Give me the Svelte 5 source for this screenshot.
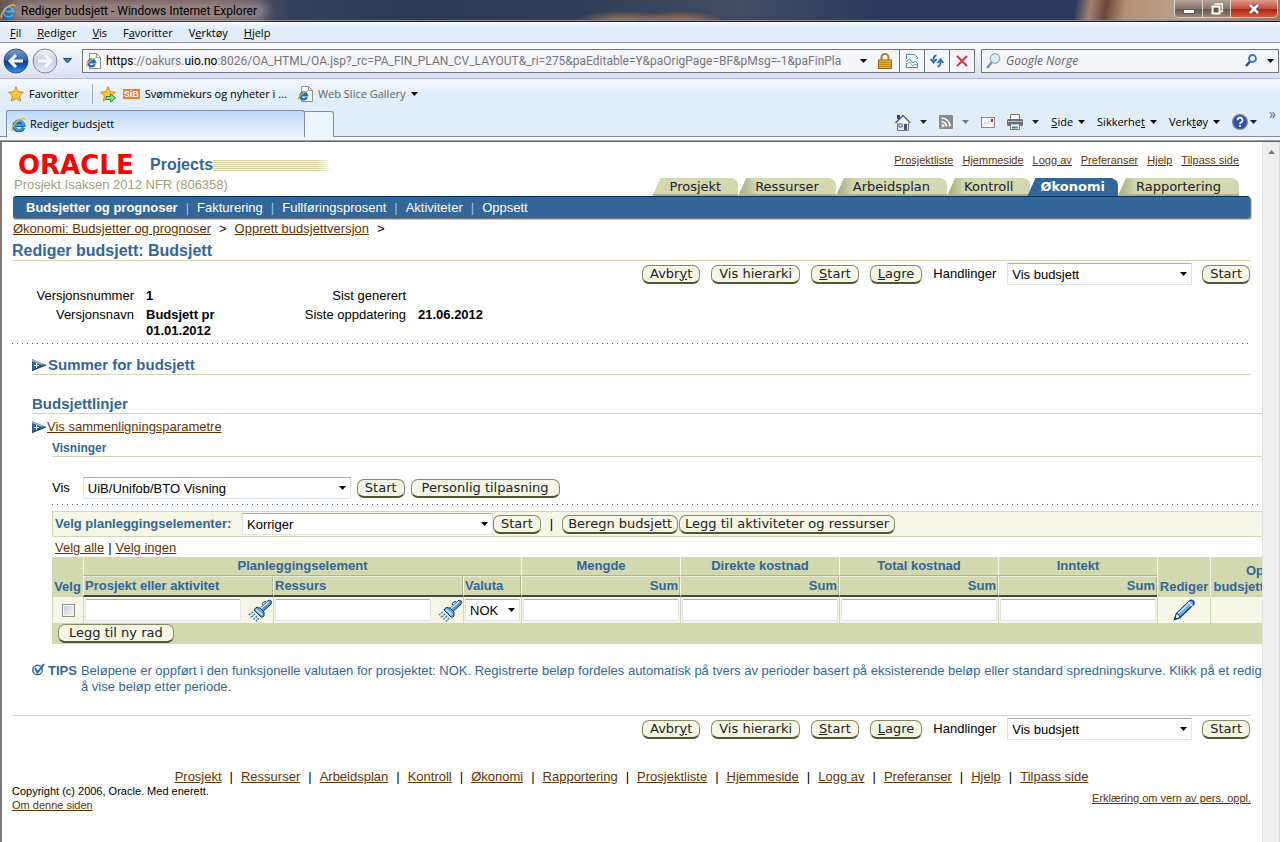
<script>
  const menu = [['', 'F', 'il'], ['', 'R', 'ediger'], ['', 'V', 'is'], ['F', 'a', 'voritter'], ['V', 'e', 'rktøy'], ['', 'H', 'jelp']];
  const commands = [['', 'S', 'ide'], ['Sikkerhe', 't', ''], ['Verk', 't', 'øy']];
  const tabs = ['Prosjekt', 'Ressurser', 'Arbeidsplan', 'Kontroll', 'Økonomi', 'Rapportering'];
  const links = ['Prosjektliste', 'Hjemmeside', 'Logg av', 'Preferanser', 'Hjelp', 'Tilpass side'];
  const subnav = ['Fakturering', 'Fullføringsprosent', 'Aktiviteter', 'Oppsett'];
  const amounts = ['Mengde', 'Direkte kostnad', 'Total kostnad', 'Inntekt'];
</script>

{#snippet ie(size)}
  <svg class="ie" width={size} height={size} viewBox="0 0 16 16" aria-hidden="true">
    <path d="M13.200 11.400A5 5 0 1 1 13.400 8.800H5.500" fill="none" stroke="#1260ae" stroke-width="3.800" />
    <path d="M12.900 11.600A5 5 0 1 1 13.600 8.600H5.500" fill="none" stroke="#3aa5e6" stroke-width="2" />
    <path d="M2 14.800C-.5 13.500 3.500 6 9 3.200c3-1.700 5.800-2.500 5.800.3" fill="none" stroke="#f2ae26" stroke-width="1.500" />
  </svg>
{/snippet}
{#snippet caret(color)}
  <svg class="caret" width="7" height="4" viewBox="0 0 7 4" aria-hidden="true"><path d="M0 0h7L3.500 4z" fill={color} /></svg>
{/snippet}
{#snippet doc()}
  <svg width="15" height="16" viewBox="0 0 15 16" aria-hidden="true">
    <path d="M3.500.5h7l4 4v11h-11z" fill="#fff" stroke="#8a8f9c" /><path d="M10.500.5v4h4" fill="none" stroke="#8a8f9c" />
    <path d="M8.800 11.300A3.400 3.400 0 1 1 9 9.200H3" fill="none" stroke="#1d74c4" stroke-width="2.400" />
    <path d="M1 13.500C0 11 4 6 10 4.800" fill="none" stroke="#f0ad25" stroke-width="1.300" />
  </svg>
{/snippet}
{#snippet disclose()}
  <svg width="14" height="12" viewBox="0 0 14 12" aria-hidden="true">
    <path d="M0 0v12l14-6z" fill="#2f6196" /><path d="M0 0v2l8 3.500h4.500z" fill="#8fb6de" /><path d="M0 11.500L14 6" stroke="#123a66" />
    <path d="M4.500 4v5M2 6.500h5" stroke="#fff" shape-rendering="crispEdges" />
  </svg>
{/snippet}
{#snippet torch()}
  <svg width="24" height="23" viewBox="0 0 24 23" aria-hidden="true">
    <path d="M12 9.500L20 1.800q1.500-1.300 3 .2t0 3L15 12.500z" fill="#5b97cf" stroke="#0d3567" />
    <path d="M8 8.500l4 .5 4 4v4l-2.500 1.500L6 11z" fill="#6aa4d8" stroke="#0d3567" />
    <path d="M13 9.500l8-7M8 10.500l6.500 5.500" stroke="#cfe8fb" stroke-width="1.500" />
    <path d="M14.500 6q-1-3 3.500-3.500" fill="none" stroke="#0d3567" />
    <path d="M5 13l-4 3M7 15l-5 4M9 17l-4 4M11 19l-3 3.500" stroke="#336fa8" stroke-width="1.400" stroke-dasharray="2 1" />
  </svg>
{/snippet}
{#snippet actions(id)}
  <div class="actions">
    <button class="pill">Avbr<u>y</u>t</button>
    <button class="pill">Vis hierarki</button>
    <button class="pill"><u>S</u>tart</button>
    <button class="pill"><u>L</u>agre</button>
    <label for={id}>Handlinger</label>
    <select {id} class="act-select"><option>Vis budsjett</option></select>
    <button class="pill">Start</button>
  </div>
{/snippet}

<div class="window">
  <header class="titlebar">
    {@render ie(16)}
    <span class="title">Rediger budsjett - Windows Internet Explorer</span>
    <div class="winbtns">
      <button aria-label="Minimer"><svg width="12" height="12" viewBox="0 0 12 12"><rect x=".5" y="6.500" width="11" height="4" fill="#fff" stroke="#555a66" /></svg></button>
      <button aria-label="Gjenopprett"><svg width="12" height="12" viewBox="0 0 12 12"><path d="M3.500 1h8v7.500h-2" fill="none" stroke="#fff" stroke-width="1.600" /><rect x="1.500" y="3.500" width="7" height="7" fill="none" stroke="#fff" stroke-width="2" /><rect x="3.500" y="5.500" width="3" height="3" fill="none" stroke="#50545e" /></svg></button>
      <button class="close" aria-label="Lukk"><svg width="12" height="12" viewBox="0 0 12 12"><path d="M2 2l8 8M10 2l-8 8" stroke="#5c3038" stroke-width="4.500" /><path d="M2 2l8 8M10 2l-8 8" stroke="#fff" stroke-width="2.800" /></svg></button>
    </div>
  </header>

  <nav class="menubar">
    {#each menu as [a, b, c]}<button>{a}<u>{b}</u>{c}</button>{/each}
  </nav>

  <div class="navbar">
    <button class="round" aria-label="Tilbake">
      <svg width="26" height="26" viewBox="0 0 26 26"><defs><linearGradient id="bk" x2="0" y2="1"><stop stop-color="#7f9fd4" /><stop offset=".48" stop-color="#2a5cb0" /><stop offset=".52" stop-color="#0a3488" /><stop offset="1" stop-color="#2f9df0" /></linearGradient></defs><circle cx="13" cy="13" r="12" fill="url(#bk)" stroke="#3c4f78" /><path d="M20 13H8M13 7l-6 6 6 6" fill="none" stroke="#fff" stroke-width="3" /></svg>
    </button>
    <button class="round" aria-label="Frem">
      <svg width="26" height="26" viewBox="0 0 26 26"><defs><linearGradient id="fw" x2="0" y2="1"><stop stop-color="#f4f6fa" /><stop offset=".5" stop-color="#c9cfdc" /><stop offset="1" stop-color="#e6eaf2" /></linearGradient></defs><circle cx="13" cy="13" r="12" fill="url(#fw)" stroke="#7c8496" /><path d="M6 13h12M13 7l6 6-6 6" fill="none" stroke="#f6f8fb" stroke-width="3" /></svg>
    </button>
    <svg class="hist" width="9" height="6" viewBox="0 0 9 6" aria-hidden="true"><path d="M.5.5h8L4.500 5z" fill="#2a86c8" stroke="#174f86" /></svg>
    <div class="address">
      {@render doc()}
      <span class="url"><b>https</b>://oakurs.<b>uio.no</b>:8026/OA_HTML/OA.jsp?_rc=PA_FIN_PLAN_CV_LAYOUT&amp;_ri=275&amp;paEditable=Y&amp;paOrigPage=BF&amp;pMsg=-1&amp;paFinPla</span>
      {@render caret('#000')}
      <svg width="14" height="16" viewBox="0 0 14 16" aria-hidden="true"><path d="M3.500 8V4.500a3.500 3.500 0 0 1 7 0V8" fill="none" stroke="#a9833a" stroke-width="2" /><rect x=".5" y="7" width="13" height="8.500" fill="#eab02c" stroke="#9a6c10" /><path d="M1 9.500h12M1 11.500h12M1 13.500h12" stroke="#c48a1a" /></svg>
      <button class="cell" aria-label="Kompatibilitetsvisning"><svg width="12" height="14" viewBox="0 0 12 14"><path d="M.5 5V.5h8l3 3V5M.5 9v4.500h11V9" fill="#fff" stroke="#3a8ac4" /><path d="M0 8l3.500-3L7 9l2-2 3 3M0 11l3.500-3L7 12l2-2 3 2" fill="none" stroke="#4a9ace" /></svg></button>
      <button class="cell" aria-label="Oppdater"><svg width="14" height="14" viewBox="0 0 14 14"><path d="M6.500 1.500Q3 2 3.500 7M.5 5l3 3.500L6.500 5M7.500 12.500Q11 12 10.500 7M7.500 9l3-3.500 3 3.500" fill="none" stroke="#2672b8" stroke-width="1.800" /></svg></button>
      <button class="cell" aria-label="Stopp"><svg width="12" height="12" viewBox="0 0 12 12"><path d="M1 1l10 10M11 1L1 11" stroke="#cf3a3c" stroke-width="2" /></svg></button>
    </div>
    <div class="search">
      <svg width="15" height="16" viewBox="0 0 15 16" aria-hidden="true"><path d="M6 9l-5 6" stroke="#8a8d96" stroke-width="2.500" /><circle cx="9" cy="5.500" r="4.800" fill="#d5ecfa" stroke="#8796aa" /></svg>
      <input aria-label="Søk" placeholder="Google Norge" />
      <svg width="12" height="13" viewBox="0 0 12 13" aria-hidden="true"><path d="M5 7.500L1 12" stroke="#1b4f9c" stroke-width="2.400" /><circle cx="7.500" cy="4.500" r="3.500" fill="none" stroke="#2a78c8" stroke-width="1.800" /></svg>
      {@render caret('#000')}
    </div>
  </div>

  <div class="favbar">
    <button class="fav"><svg width="16" height="16" viewBox="0 0 16 16"><path d="M8 .8l2.200 4.900 5.200.6-3.900 3.500 1.100 5.200L8 12.300 3.400 15l1.100-5.200L.6 6.300l5.200-.6z" fill="#ffc83a" stroke="#cf8a16" /></svg>Favoritter</button>
    <i class="vr"></i>
    <svg width="17" height="16" viewBox="0 0 17 16" aria-hidden="true"><path d="M8 .8l2.200 4.900 5.200.6-3.900 3.500 1.100 5.200L8 12.300 3.400 15l1.100-5.200L.6 6.300l5.200-.6z" fill="#ffc83a" stroke="#cf8a16" /><path d="M6 10.500h4.500V8l5 4-5 4v-2.500H6z" fill="#8fe07f" stroke="#2a8d2c" /></svg>
    <a class="site" href="#svomme"><span class="sib">SiB</span>Svømmekurs og nyheter i ...</a>
    <a class="slice" href="#slice">{@render doc()}Web Slice Gallery {@render caret('#000')}</a>
  </div>

  <div class="tabbar">
    <button class="btab">{@render ie(15)}Rediger budsjett</button>
    <button class="newtab" aria-label="Ny fane"></button>
    <div class="cmds">
      <svg width="16" height="17" viewBox="0 0 16 17" aria-hidden="true"><path d="M2.500 8h11v8.500h-11z" fill="#e8e8f0" stroke="#70748c" /><path d="M.5 9L8 1.500 15.500 9" fill="#fff" stroke="#4a5698" stroke-width="1.400" /><path d="M2 1h3v4H2z" fill="#2c3ea8" /><path d="M4 10h3v3H4z" fill="#fff" stroke="#555" /><path d="M9 10h3v6H9z" fill="#3a4f7c" /></svg>
      {@render caret('#222')}
      <svg width="14" height="14" viewBox="0 0 14 14" aria-hidden="true"><rect width="14" height="14" rx="1" fill="#8b8b8b" /><circle cx="4" cy="10.500" r="1.500" fill="#fff" /><path d="M2.500 6.500a5 5 0 0 1 5 5M2.500 3a8.500 8.500 0 0 1 8.500 8.500" fill="none" stroke="#fff" stroke-width="1.700" /></svg>
      {@render caret('#777')}
      <svg width="14" height="11" viewBox="0 0 14 11" aria-hidden="true"><rect x=".5" y=".5" width="13" height="10" fill="#f6f6f6" stroke="#8a8a90" /><rect x="10" y="2" width="2" height="3" fill="#c22" /><path d="M3 6h5" stroke="#bbb" /></svg>
      <svg width="16" height="16" viewBox="0 0 16 16" aria-hidden="true"><path d="M3.500 5V.5h9V5" fill="#fff" stroke="#777" /><rect y="5" width="16" height="7" rx="1.500" fill="#6d6f76" /><path d="M1 7.500h14" stroke="#b9bbc2" /><path d="M3.500 10h9v5.500h-9z" fill="#fff" stroke="#777" /><path d="M5 13.500h3" stroke="#2a78c8" stroke-width="2" /><path d="M8 13.500h3" stroke="#4a4" stroke-width="2" /></svg>
      {@render caret('#222')}
      {#each commands as [a, b, c]}<button class="cmd"><span>{a}<u>{b}</u>{c}</span>{@render caret('#000')}</button>{/each}
      <button class="help" aria-label="Hjelp"><svg width="16" height="16" viewBox="0 0 16 16"><circle cx="8" cy="8" r="7.300" fill="#2c50b4" stroke="#76808f" stroke-width="1.400" /><path d="M5.500 6.200a2.500 2.500 0 1 1 3.600 2.200Q8 9 8 10" fill="none" stroke="#fff" stroke-width="1.700" /><circle cx="8" cy="12" r="1.100" fill="#fff" /></svg>{@render caret('#222')}</button>
      <span class="more">»</span>
    </div>
  </div>

  <div class="view">
    <main>
      <div class="narrow">
        <div class="top">
          <div class="brand">
            <div class="logos"><span class="oracle">ORACLE</span><span class="product">Projects</span><i class="stripes"></i></div>
            <div class="project">Prosjekt Isaksen 2012 NFR (806358)</div>
          </div>
          <div class="topright">
            <div class="toplinks">{#each links as l}<a href="#{l}">{l}</a>{/each}</div>
            <nav class="tabs">{#each tabs as t}<a href="#{t}" class:on={t === 'Økonomi'}>{t}</a>{/each}</nav>
          </div>
        </div>
        <nav class="subnav"><b>Budsjetter og prognoser</b>{#each subnav as s}<i>|</i><a href="#{s}">{s}</a>{/each}</nav>
        <div class="crumbs"><a href="#okonomi">Økonomi: Budsjetter og prognoser</a><span>&gt;</span><a href="#opprett">Opprett budsjettversjon</a><span>&gt;</span></div>
        <h1>Rediger budsjett: Budsjett</h1>
        {@render actions('act-top')}
        <dl class="fields">
          <dt>Versjonsnummer</dt><dd>1</dd><dt>Sist generert</dt><dd></dd>
          <dt>Versjonsnavn</dt><dd>Budsjett pr 01.01.2012</dd><dt>Siste oppdatering</dt><dd>21.06.2012</dd>
        </dl>
        <div class="dots"></div>
        <h2 class="sum">{@render disclose()}Summer for budsjett</h2>
      </div>

      <section class="lines">
        <h2>Budsjettlinjer</h2>
        <div class="compare">{@render disclose()}<a href="#param">Vis sammenligningsparametre</a></div>
        <div class="views">
          <h3>Visninger</h3>
          <div class="viewrow">
            <label for="vis">Vis</label>
            <select id="vis" class="vis-select"><option>UiB/Unifob/BTO Visning</option></select>
            <button class="pill">Start</button>
            <button class="pill wide">Personlig tilpasning</button>
          </div>
          <div class="dots"></div>
          <div class="toolbar">
            <label for="velg">Velg planleggingselementer:</label>
            <select id="velg" class="el-select"><option>Korriger</option></select>
            <button class="pill">Start</button>
            <span class="bar">|</span>
            <button class="pill tight">Beregn budsjett</button>
            <button class="pill tight">Legg til aktiviteter og ressurser</button>
          </div>
          <div class="picks"><a href="#alle">Velg alle</a><span>|</span><a href="#ingen">Velg ingen</a></div>
          <table>
            <colgroup><col class="c-pick" /><col class="c-el" /><col class="c-el" /><col class="c-cur" />{#each amounts as a}<col class="c-sum" />{/each}<col class="c-edit" /><col class="c-last" /></colgroup>
            <thead>
              <tr><th rowspan="2" class="low">Velg</th><th colspan="3" class="group">Planleggingselement</th>{#each amounts as a}<th class="group">{a}</th>{/each}<th rowspan="2" class="low">Rediger</th><th rowspan="2" class="low right">Op<br />budsjett</th></tr>
              <tr><th class="sub">Prosjekt eller aktivitet</th><th class="sub">Ressurs</th><th class="sub">Valuta</th>{#each amounts as a}<th class="sub right">Sum</th>{/each}</tr>
            </thead>
            <tbody>
              <tr>
                <td class="mid"><input type="checkbox" aria-label="Velg rad" /></td>
                <td><div class="lov"><input class="txt" aria-label="Prosjekt eller aktivitet" /><button aria-label="Søk prosjekt">{@render torch()}</button></div></td>
                <td><div class="lov"><input class="txt" aria-label="Ressurs" /><button aria-label="Søk ressurs">{@render torch()}</button></div></td>
                <td><select class="cur" aria-label="Valuta"><option>NOK</option></select></td>
                {#each amounts as a}<td><input class="txt" aria-label={a} /></td>{/each}
                <td class="mid"><button class="edit" aria-label="Rediger"><svg width="22" height="22" viewBox="0 0 22 22"><path d="M1.500 20.500l2-6L17 1.500q2-1 3.500 1t-.5 3.500L7 18.500z" fill="#6fb1ee" stroke="#0c2a86" stroke-width="1.300" /><path d="M5 14.500L17 3" stroke="#cfe8fd" stroke-width="1.500" /><path d="M3.500 14.500q3 .5 3.500 4l-5.500 2z" fill="#fff" stroke="#0c2a86" /><path d="M15.500 3l3.800 4" stroke="#fff" stroke-width="1.500" /><path d="M1 21l.8-3L4 20z" fill="#0c2a86" /></svg></button></td>
                <td></td>
              </tr>
            </tbody>
            <tfoot><tr><td colspan="10"><button class="pill wide">Legg til ny rad</button></td></tr></tfoot>
          </table>
        </div>
        <div class="tip">
          <svg width="13" height="13" viewBox="0 0 13 13" aria-hidden="true"><circle cx="5.500" cy="7" r="4.700" fill="none" stroke="#336699" stroke-width="1.500" /><path d="M3 5l2.500 4.500L12 1" fill="none" stroke="#336699" stroke-width="2" /></svg>
          <strong>TIPS</strong>
          <p>Beløpene er oppført i den funksjonelle valutaen for prosjektet: NOK. Registrerte beløp fordeles automatisk på tvers av perioder basert på eksisterende beløp eller standard spredningskurve. Klikk på et redige<br />å vise beløp etter periode.</p>
        </div>
      </section>

      <div class="narrow">
        <hr />
        {@render actions('act-bottom')}
        <nav class="footlinks">{#each [...tabs, ...links] as l, i}{#if i}<span>|</span>{/if}<a href="#{l}">{l}</a>{/each}</nav>
        <footer>
          <div>Copyright (c) 2006, Oracle. Med enerett.<br /><a href="#om">Om denne siden</a></div>
          <a href="#vern">Erklæring om vern av pers. oppl.</a>
        </footer>
      </div>
    </main>
    <div class="scroll"><svg width="7" height="4" viewBox="0 0 7 4" aria-hidden="true"><path d="M0 4h7L3.500 0z" fill="#777" /></svg></div>
  </div>
</div>

<style>
  :global(body) { margin: 0; overflow: hidden; background: #fff; }
  * { box-sizing: border-box; }
  button { font: inherit; color: inherit; background: none; border: 0; padding: 0; margin: 0; white-space: nowrap; }
  svg { display: block; flex: none; }
  .window { display: flex; flex-direction: column; height: 100vh; overflow: hidden; font: 11px/16px "Open Sans", "Noto Sans", sans-serif; color: #000; }
  .titlebar { display: flex; align-items: center; gap: 4px; height: 23px; flex: none; border-bottom: 1px solid #fff; box-shadow: inset 0 -1px #1c1c24, inset 0 -2px #8b8c98;
    background: radial-gradient(50px 10px at 625px 21px, #a67c55, transparent), radial-gradient(45px 10px at 680px 21px, #b4714c, transparent), linear-gradient(100deg, transparent 1060px, #a08372 1075px, #6e4638 1090px, #b39176 1110px, #b7a08b 1160px, #947967), linear-gradient(90deg, #6d5552, #6b5657 220px, #35425f 290px, #2c3955 420px, #333f5a 600px, #434b63 740px, #2b3a5c 880px, #2b3a5c); }
  .title { padding: 0 6px; margin-left: -5px; border-radius: 10px; background: rgba(204, 194, 190, .4); box-shadow: 0 0 10px 5px rgba(204, 194, 190, .4); font: 12px/12px Roboto, sans-serif; }
  .winbtns { display: flex; margin: 0 2px 0 auto; align-self: flex-start; height: 18px; border: 1px solid #d8d0cc; border-top: 0; border-radius: 0 0 5px 5px; overflow: hidden; }
  .winbtns button { width: 28px; display: grid; place-items: center; background: linear-gradient(#b5a197, #86766f 50%, #5f524d 51%, #9a8878); border-right: 1px solid #d8d0cc; }
  .winbtns .close { width: 46px; border: 0; background: linear-gradient(#df9c8c, #c5503c 50%, #a82010 51%, #d8583c); }
  .menubar { display: flex; gap: 16px; height: 20px; flex: none; padding-left: 10px; background: linear-gradient(#f4f9fe, #e1edf9 5px); border-bottom: 1px solid #9090a6; }
  .menubar button { line-height: 19px; }
  .navbar { display: flex; align-items: center; height: 36px; flex: none; padding: 0 1px 0 3px; background: linear-gradient(#fff, #eceff9 40%, #d9dff2); border-bottom: 1px solid #b2b8d6; }
  .round { margin-right: 3px; }
  .hist { margin: 0 10px 0 2px; }
  .address, .search { display: flex; align-items: center; height: 24px; border: 1px solid #70747c; background: #f3f5fb; }
  .address { flex: 1; min-width: 0; padding-left: 3px; }
  .url { flex: 1; min-width: 0; margin: 0 8px 0 5px; overflow: hidden; white-space: nowrap; color: #777; font: 12px/16px Roboto, sans-serif; }
  .url b { font-weight: 400; color: #000; }
  .address .caret { margin-right: 11px; }
  .cell { width: 25px; height: 22px; border-left: 1px solid #70747c; display: grid; place-items: center; }
  .address svg + .cell { margin-left: 7px; }
  .search { width: 298px; margin-left: 6px; padding: 0 4px; }
  .search input { flex: 1; min-width: 0; border: 0; padding: 0 5px; background: none; font: italic 12px "Open Sans", sans-serif; }
  .search input::placeholder { color: #666; opacity: 1; }
  .search .caret { margin-left: 10px; }
  .favbar { display: flex; align-items: center; height: 30px; flex: none; padding-left: 8px; background: linear-gradient(#f4f8fe, #e9f1fb 12px, #e1edf9 13px); }
  .fav, .site, .slice { display: flex; align-items: center; gap: 5px; color: #000; text-decoration: none; }
  .vr { width: 1px; height: 20px; background: #a5adba; margin: 0 7px 0 13px; }
  .sib { background: #ee7d2c; color: #fff; font: bold 9px/10px "Liberation Sans", sans-serif; padding: 0 1px; }
  .site { margin: 0 11px 0 6px; }
  .slice { color: #666; }
  .tabbar { display: flex; align-items: flex-end; height: 31px; flex: none; padding-left: 6px; background: #e1edf9; border-bottom: 3px solid #f4f6fb; box-shadow: inset 0 -1px #868ba5; }
  .btab { display: flex; align-items: center; gap: 4px; width: 299px; height: 27px; padding-left: 4px; border: 1px solid #868ba5; border-bottom: 0; border-radius: 3px 3px 0 0; background: linear-gradient(#bcd9f8, #dfecfb 70%, #eff5fc); }
  .newtab { width: 29px; height: 26px; border: 1px solid #868ba5; border-left: 0; border-bottom: 0; border-radius: 0 3px 0 0; background: #ecf4fc; }
  .cmds { display: flex; align-items: center; gap: 12px; height: 30px; margin-left: auto; padding-right: 4px; }
  .cmds > .caret { margin-left: -3px; }
  .cmd { display: flex; align-items: center; gap: 5px; }
  .help { display: flex; align-items: center; gap: 2px; }
  .more { color: #5b63a8; font-size: 14px; align-self: flex-start; line-height: 14px; }

  .view { display: flex; flex: 1; min-height: 0; border-top: 1px solid #a0a0a0; box-shadow: inset 0 1px #646464; padding-top: 1px; font: 13px/16px "Liberation Sans", Arial, sans-serif; }
  main { flex: 1; min-width: 0; overflow: hidden; padding: 0 0 0 10px; border-left: 2px solid #7c7c7c; }
  .scroll { width: 18px; background: #efefef; border-left: 1px solid #e2e2e2; border-right: 1px solid #d8d8d8; display: flex; justify-content: center; padding-top: 8px; }
  .narrow { margin-right: 11px; }
  main a { color: #663300; }
  .top { display: flex; justify-content: space-between; height: 54px; }
  .brand { padding: 12px 0 0 2px; }
  .logos { display: flex; align-items: center; height: 22px; }
  .oracle { width: 136px; padding-left: 4px; font: bold 26px/22px "DejaVu Sans", sans-serif; color: #f00; }
  .product { font: bold 16px/22px "Liberation Sans", sans-serif; color: #336699; }
  .stripes { width: 119px; height: 11px; background: repeating-linear-gradient(#d2d2a0 0 1px, #f4f4e0 1px 2px); -webkit-mask: linear-gradient(90deg, #000 88%, transparent); mask: linear-gradient(90deg, #000 88%, transparent); }
  .project { color: #a0a07a; line-height: 18px; }
  .topright { display: flex; flex-direction: column; justify-content: space-between; padding: 10px 12px 0 0; }
  .toplinks { display: flex; justify-content: flex-end; gap: 9px; font-size: 11px; }
  .tabs { display: flex; justify-content: flex-end; font: 13px/17px "DejaVu Sans", sans-serif; }
  .tabs a { height: 18px; padding: 0 17px; color: #222; text-decoration: none; clip-path: polygon(8px 0, calc(100% - 6px) 0, calc(100% - 1px) 3px, 100% 7px, 100% 100%, 0 100%); background: linear-gradient(transparent 16px, #aeb284 16px), linear-gradient(90deg, #a4a97c, #d2d8b0 18px); }
  .tabs a:first-child { background: linear-gradient(transparent 16px, #aeb284 16px), #d2d8b0; }
  .tabs a:last-child { padding: 0 18px; }
  .tabs a.on { margin-left: -3px; padding: 0 13px; background: #336699; color: #fff; font-weight: bold; }
  .subnav { display: flex; align-items: center; height: 22px; padding-left: 13px; margin: 0 1px; color: #fff; background: #336699; border-top: 1px solid #003366; border-radius: 3px; box-shadow: 0 1px #777, 0 2px #c4c4c4, 1px 1px #777, 2px 2px #c4c4c4; }
  .subnav a { color: #fff; text-decoration: none; }
  .subnav i { font-style: normal; color: #9fc4ea; padding: 0 8px; }
  .crumbs { display: flex; gap: 8px; padding: 3px 0 0 1px; height: 23px; }
  h1 { margin: 0; height: 20px; font-size: 16px; line-height: 20px; color: #336699; border-bottom: 1px solid #d2d8b0; }
  .actions { display: flex; align-items: center; justify-content: flex-end; height: 26px; padding-right: 1px; }
  .actions .pill { margin-right: 11px; }
  .actions .pill:last-child { margin-right: 0; }
  .actions label { margin-right: 11px; }
  .pill { height: 19px; padding: 0 7px; font: 13px/16px "DejaVu Sans", sans-serif; color: #222; background: #f5f6e6; border: 1px solid #858b60; border-bottom: 2px solid #4f5630; border-radius: 7px; }
  .pill.wide { padding: 0 10px; }
  .pill.tight { padding: 0 5px; }
  select { appearance: none; height: 22px; margin: 0; padding: 0 18px 0 4px; font: 13px "Liberation Sans", sans-serif; color: #000; border: 1px solid #e2e3ea; border-top-color: #abadb3; border-radius: 1px; background: #fff url("data:image/svg+xml,%3Csvg xmlns='http://www.w3.org/2000/svg' width='7' height='4'%3E%3Cpath d='M0 0h7L3.5 4z'/%3E%3C/svg%3E") no-repeat right 4px center; }
  .act-select { width: 185px; margin-right: 10px; }
  .fields { display: grid; grid-template-columns: 122px 100px 148px 1fr; column-gap: 12px; row-gap: 3px; margin: 0; padding-top: 1px; }
  .fields dt { text-align: right; }
  .fields dd { margin: 0; font-weight: bold; }
  .dots { height: 1px; background: repeating-linear-gradient(90deg, #336699 0 1px, transparent 1px 5px); }
  .fields + .dots { margin-top: 4px; }
  h2 { display: flex; align-items: center; margin: 0; font-size: 15px; line-height: 18px; height: 19px; color: #336699; border-bottom: 1px solid #d2d8b0; }
  .sum { margin: 12px 0 0 20px; gap: 2px; }
  .lines { margin: 20px 0 0 20px; }
  .compare { display: flex; align-items: center; gap: 1px; height: 25px; }
  .views { margin-left: 20px; }
  h3 { margin: 0; font-size: 12px; line-height: 19px; height: 18px; color: #336699; border-bottom: 1px solid #d2d8b0; }
  .viewrow { display: flex; align-items: center; gap: 6px; height: 47px; padding-top: 15px; }
  .vis-select { width: 268px; margin-left: 7px; }
  .toolbar { display: flex; align-items: center; height: 26px; margin-top: 6px; padding-left: 2px; background: #f5f6e6; border: 1px solid #d2d8b0; border-right: 0; }
  .toolbar label { width: 187px; font-weight: bold; color: #336699; }
  .el-select { width: 251px; }
  .bar { padding: 0 9px; }
  .toolbar .pill + .pill { margin-left: 1px; }
  .picks { display: flex; gap: 4px; height: 20px; padding: 3px 0 0 3px; }
  table { table-layout: fixed; width: 1214px; border-collapse: separate; border-spacing: 0; background: #d2d8b0; }
  .c-pick { width: 31px; } .c-el { width: 190px; } .c-cur { width: 58px; } .c-sum { width: 159px; } .c-edit { width: 53px; } .c-last { width: 56px; }
  th { padding: 0 1px; color: #336699; white-space: nowrap; }
  .group { height: 19px; border-bottom: 1px solid #b0b39a; border-left: 1px solid #f5f6e6; }
  .sub { height: 21px; text-align: left; border-top: 1px solid #e9ecd5; border-left: 1px solid #f5f6e6; border-bottom: 2px solid #4a4a42; box-shadow: inset -1px 0 #b0b39a; }
  .low { vertical-align: bottom; padding-bottom: 2px; border-left: 1px solid #f5f6e6; }
  .low:first-child { border-left: 0; }
  .right { text-align: right; padding-right: 2px; }
  tbody td { height: 26px; padding: 0 1px; background: #f5f6e6; border-left: 1px solid #d2d8b0; }
  .mid { text-align: center; }
  .edit { display: block; margin: 0 auto; }
  input[type="checkbox"] { appearance: none; display: block; width: 13px; height: 13px; margin: 0 auto; border: 1px solid #8e8f8f; background: linear-gradient(135deg, #c8ccd2, #f6f6f6); box-shadow: inset 0 0 0 1px #f4f4f4; }
  .txt { display: block; width: 156px; height: 22px; border: 1px solid #e2e3ea; border-top-color: #abadb3; border-radius: 2px; background: #fff; }
  .lov { display: flex; align-items: center; justify-content: space-between; }
  .cur { display: block; width: 55px; }
  tfoot td { height: 21px; padding: 0 0 0 6px; }
  tfoot .pill { display: block; }
  .tip { display: flex; align-items: flex-start; margin-top: 19px; color: #336699; }
  .tip strong { margin: 0 4px 0 3px; }
  .tip p { margin: 0; white-space: nowrap; }
  hr { margin: 20px 0 0; border: 0; border-top: 1px solid #d2d8b0; }
  .footlinks { display: flex; justify-content: center; gap: 8px; height: 15px; margin-top: 27px; }
  footer { display: flex; justify-content: space-between; align-items: center; font-size: 11px; line-height: 14px; }
</style>
